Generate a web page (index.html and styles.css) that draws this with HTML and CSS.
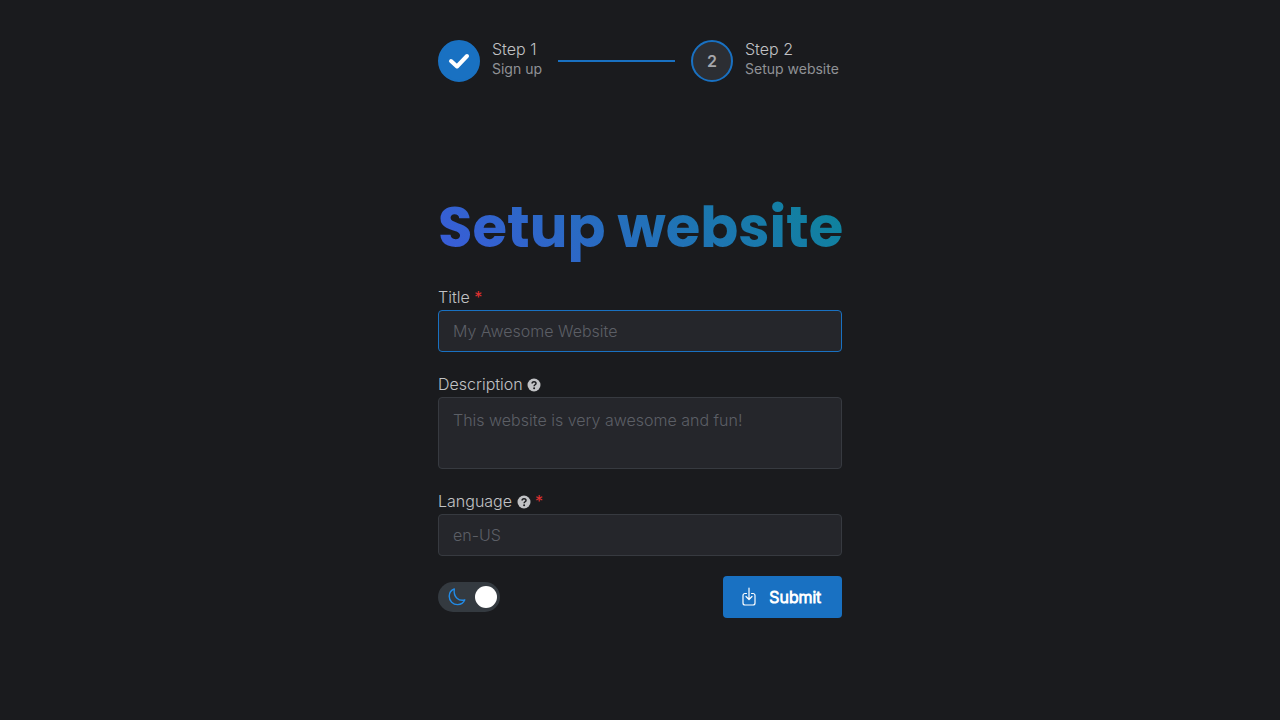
FILE: index.html
```html
<!DOCTYPE html>
<html lang="en">
<head>
<meta charset="utf-8">
<meta name="viewport" content="width=device-width, initial-scale=1">
<title>Setup website</title>
<link rel="stylesheet" href="styles.css">
</head>
<body>
<main class="page">
  <nav class="stepper" aria-label="Progress">
    <button type="button" class="step">
      <span class="step-icon step-icon-done">
        <svg width="22" height="18" viewBox="0 0 22 18" fill="none" stroke="currentColor" stroke-width="4" stroke-linecap="round" stroke-linejoin="round" aria-hidden="true"><path d="M3 9l6 5.500L19 4"/></svg>
      </span>
      <span class="step-body"><span class="step-label">Step 1</span><span class="step-description">Sign up</span></span>
    </button>
    <span class="separator"></span>
    <button type="button" class="step" aria-current="step">
      <span class="step-icon">2</span>
      <span class="step-body step-body-wide"><span class="step-label">Step 2</span><span class="step-description">Setup website</span></span>
    </button>
  </nav>
  <h1 class="title">Setup website</h1>
  <form class="form">
    <div class="field">
      <label class="label" for="title">Title <span class="required">*</span></label>
      <input class="input input-active" id="title" type="text" placeholder="My Awesome Website" required>
    </div>
    <div class="field">
      <label class="label" for="description">Description
        <svg class="help" width="14" height="14" viewBox="0 0 14 14" aria-hidden="true"><circle class="help-disc" cx="7" cy="7" r="6.5"/><path class="help-mark" d="M5.1 5.5C5.1 3.1 9 3.1 9 5.4C9 6.8 7.1 6.7 7.1 8.2"/><circle class="help-dot" cx="7.1" cy="10.3" r="1"/></svg>
      </label>
      <textarea class="input textarea" id="description" placeholder="This website is very awesome and fun!"></textarea>
    </div>
    <div class="field">
      <label class="label" for="language">Language
        <svg class="help" width="14" height="14" viewBox="0 0 14 14" aria-hidden="true"><circle class="help-disc" cx="7" cy="7" r="6.5"/><path class="help-mark" d="M5.1 5.5C5.1 3.1 9 3.1 9 5.4C9 6.8 7.1 6.7 7.1 8.2"/><circle class="help-dot" cx="7.1" cy="10.3" r="1"/></svg>
        <span class="required">*</span></label>
      <input class="input" id="language" type="text" placeholder="en-US" required>
    </div>
    <div class="actions">
      <label class="switch">
        <input class="switch-input" type="checkbox" role="switch" aria-label="Dark mode" checked>
        <svg class="moon" width="18" height="18" viewBox="0 0 18 18" fill="none" stroke="currentColor" stroke-width="1.4" stroke-linejoin="round" aria-hidden="true"><path d="M6.3 1C3.2 2.2 1.2 4.8 1.2 8.2a8.4 8.4 0 0 0 8.4 8.4c3.3 0 5.9-1.6 7.2-4.8C11 13.4 5.2 9.4 6.3 1z"/></svg>
        <span class="thumb"></span>
      </label>
      <button type="submit" class="submit">
        <svg width="16" height="20" viewBox="0 0 16 20" fill="none" stroke="currentColor" stroke-width="1.2" stroke-linecap="round" stroke-linejoin="round" aria-hidden="true"><path d="M5.500 6.500H4a2 2 0 0 0-2 2V16a2 2 0 0 0 2 2h8a2 2 0 0 0 2-2V8.500a2 2 0 0 0-2-2h-1.500M8 1v11M5 9.500l3 3 3-3"/></svg>
        <span>Submit</span>
      </button>
    </div>
  </form>
</main>
</body>
</html>
```
FILE: styles.css
```css
* { box-sizing: border-box; }
body {
  margin: 0;
  background: #1a1b1e;
  color: #c1c2c5;
  font: 300 16px/25px Inter, "Liberation Sans", sans-serif;
}
button, input, textarea { font: inherit; color: inherit; }
button { border: 0; background: none; padding: 0; cursor: pointer; }
.page {
  width: 100%;
  max-width: 436px;
  margin: 0 auto;
  padding: 40px 16px;
}
.stepper { display: flex; align-items: center; gap: 16px; }
.step { display: flex; gap: 12px; text-align: left; }
.step-icon {
  display: flex;
  align-items: center;
  justify-content: center;
  width: 42px;
  height: 42px;
  border: 2px solid #1971c2;
  border-radius: 50%;
  background: #2c2e33;
  color: #a6a7ab;
  font-weight: 600;
}
.step-icon-done { background: #1971c2; color: #fff; }
.step-body { display: flex; flex-direction: column; min-width: 50px; white-space: nowrap; }
.step-body-wide { min-width: 97px; }
.step-label { line-height: 18px; }
.step-description { font-size: 14px; line-height: 22px; font-weight: 400; color: #909296; }
.separator { flex: 1; height: 2px; background: #1971c2; }
.title {
  margin: 108px 0 20px;
  font-family: Poppins, Inter, sans-serif;
  font-size: 56px;
  line-height: 75px;
  font-weight: 700;
  white-space: nowrap;
  background: linear-gradient(45deg, #3b5bdb 0%, #0c8599 100%);
  background-clip: text;
  -webkit-background-clip: text;
  color: transparent;
}
.form { display: flex; flex-direction: column; gap: 20px; }
.field { display: flex; flex-direction: column; }
.label { line-height: 25px; }
.required { color: #e03131; font-weight: 400; }
.help { vertical-align: -2px; }
.help-disc { fill: #c1c2c5; }
.help-mark { fill: none; stroke: #1a1b1e; stroke-width: 1.5; }
.help-dot { fill: #1a1b1e; }
.input {
  display: block;
  width: 100%;
  height: 42px;
  padding: 0 14px;
  border: 1px solid #373a40;
  border-radius: 4px;
  background: #25262b;
  outline: none;
}
.input::placeholder { color: #5c5f66; opacity: 1; }
.input:focus, .input-active { border-color: #1971c2; }
.textarea { height: 72px; padding: 10px 14px; resize: none; }
.actions { display: flex; align-items: center; justify-content: space-between; }
.switch {
  display: flex;
  align-items: center;
  justify-content: space-between;
  width: 62px;
  height: 30px;
  padding: 0 3px 0 10px;
  border-radius: 15px;
  background: #343a40;
  cursor: pointer;
}
.switch-input { position: absolute; opacity: 0; }
.moon { color: #228be6; }
.thumb { width: 22px; height: 22px; border-radius: 50%; background: #fff; }
.submit {
  display: flex;
  align-items: center;
  gap: 12px;
  height: 42px;
  padding: 0 21px 0 18px;
  border-radius: 4px;
  background: #1971c2;
  color: #fff;
}
.submit span { -webkit-text-stroke: 1px currentColor; }
```
